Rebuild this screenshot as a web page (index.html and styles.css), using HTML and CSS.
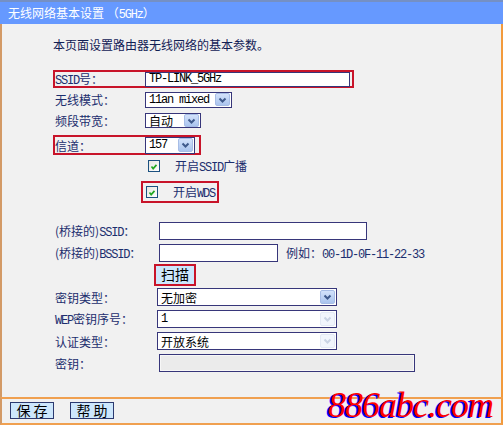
FILE: index.html
```html
<!DOCTYPE html>
<html lang="zh-CN">
<head>
  <meta charset="UTF-8">
  <title>无线网络基本设置</title>
  <link rel="stylesheet" href="styles.css">
</head>
<body>
  <div class="page">
    <div class="title">无线网络基本设置 （<span class="en">5GHz</span>）</div>

    <div class="main">
      <p class="intro">本页面设置路由器无线网络的基本参数。</p>

      <div class="form">
        <div class="row hl row-ssid">
          <span class="label"><span class="en">SSID</span>号：</span>
          <span class="input en ssid">TP-LINK_5GHz</span>
        </div>
        <div class="row">
          <span class="label">无线模式：</span>
          <span class="select mode">
            <span class="val en">11an mixed</span>
            <span class="arrow"><svg width="13" height="12" viewBox="0 0 13 12"><path d="M3.5 4.5 L6.5 7.5 L9.5 4.5" fill="none" stroke="#3f5a8c" stroke-width="2"/></svg></span>
          </span>
        </div>
        <div class="row">
          <span class="label">频段带宽：</span>
          <span class="select band">
            <span class="val">自动</span>
            <span class="arrow"><svg width="13" height="12" viewBox="0 0 13 12"><path d="M3.5 4.5 L6.5 7.5 L9.5 4.5" fill="none" stroke="#3f5a8c" stroke-width="2"/></svg></span>
          </span>
        </div>
        <div class="row hl row-channel">
          <span class="label">信道：</span>
          <span class="select channel">
            <span class="val en">157</span>
            <span class="arrow"><svg width="13" height="12" viewBox="0 0 13 12"><path d="M3.5 4.5 L6.5 7.5 L9.5 4.5" fill="none" stroke="#3f5a8c" stroke-width="2"/></svg></span>
          </span>
        </div>
        <div class="row row-check">
          <span class="check"><svg width="12" height="12" viewBox="0 0 12 12"><path d="M3 5.5 L5 8 L9 3.5" fill="none" stroke="#22a822" stroke-width="2"/></svg></span>
          <span>开启<span class="en">SSID</span>广播</span>
        </div>
        <div class="row hl row-wds">
          <span class="check"><svg width="12" height="12" viewBox="0 0 12 12"><path d="M3 5.5 L5 8 L9 3.5" fill="none" stroke="#22a822" stroke-width="2"/></svg></span>
          <span>开启<span class="en">WDS</span></span>
        </div>
      </div>

      <div class="form bridge">
        <div class="row">
          <span class="label">(桥接的)<span class="en">SSID</span>：</span>
          <span class="input bssid-wide"></span>
        </div>
        <div class="row">
          <span class="label">(桥接的)<span class="en">BSSID</span>：</span>
          <span class="input bssid"></span>
          <span class="hint">例如：<span class="en">00-1D-0F-11-22-33</span></span>
        </div>
        <div class="row hl row-scan">
          <span class="btn scan">扫描</span>
        </div>
        <div class="row">
          <span class="label">密钥类型：</span>
          <span class="select key">
            <span class="val">无加密</span>
            <span class="arrow"><svg width="13" height="12" viewBox="0 0 13 12"><path d="M3.5 4.5 L6.5 7.5 L9.5 4.5" fill="none" stroke="#3f5a8c" stroke-width="2"/></svg></span>
          </span>
        </div>
        <div class="row">
          <span class="label"><span class="en">WEP</span>密钥序号：</span>
          <span class="select key off">
            <span class="val en">1</span>
            <span class="arrow"><svg width="13" height="12" viewBox="0 0 13 12"><path d="M3.5 4.5 L6.5 7.5 L9.5 4.5" fill="none" stroke="#c9d3e4" stroke-width="2"/></svg></span>
          </span>
        </div>
        <div class="row">
          <span class="label">认证类型：</span>
          <span class="select key off">
            <span class="val">开放系统</span>
            <span class="arrow"><svg width="13" height="12" viewBox="0 0 13 12"><path d="M3.5 4.5 L6.5 7.5 L9.5 4.5" fill="none" stroke="#c9d3e4" stroke-width="2"/></svg></span>
          </span>
        </div>
        <div class="row">
          <span class="label">密钥：</span>
          <span class="input secret"></span>
        </div>
      </div>
    </div>

    <div class="footer">
      <span class="btn">保 存</span>
      <span class="btn">帮 助</span>
    </div>

    <div class="mark">886abc.com</div>
  </div>
</body>
</html>
```

FILE: styles.css
```css
* {
  margin: 0;
  padding: 0;
  box-sizing: border-box;
}

body {
  font-family: "Noto Sans CJK SC", "Liberation Sans", sans-serif;
  font-size: 12px;
  background: #f1f1f1;
  color: #1c2e6e;
}

.en {
  font-family: "Liberation Mono", "Noto Sans CJK SC", monospace;
  letter-spacing: -1.2px;
}

.page {
  position: relative;
  width: 503px;
  height: 425px;
  display: flex;
  flex-direction: column;
  overflow: hidden;
}

.title {
  height: 24px;
  line-height: 21px;
  padding-left: 8px;
  background: #6699ff;
  border-top: 2px solid #7590c4;
  color: #ffffff;
}

.main {
  flex: 1;
  border-left: 2px solid #d39a66;
  border-right: 2px solid #f29a3c;
}

.intro {
  margin: 14px 0 0 51px;
  line-height: 14px;
  color: #112055;
}

.form {
  margin-top: 18px;
  padding-left: 53px;
}

.row {
  display: flex;
  align-items: center;
  height: 21px;
  white-space: nowrap;
}

.hl {
  width: fit-content;
  margin-left: -2px;
  border: 2px solid #c8142a;
}

.row-ssid {
  height: 18px;
  margin-top: 2px;
  margin-bottom: 1px;
  padding-right: 2px;
}

.row-channel {
  height: 20px;
  margin-top: 4px;
  padding-right: 4px;
}

.row-check {
  padding-left: 93px;
}

.row-wds {
  height: 22px;
  margin-top: 5px;
  margin-left: 86px;
  padding-left: 3px;
  padding-right: 2px;
}

.label {
  width: 90px;
}

.input {
  display: inline-block;
  height: 18px;
  line-height: 16px;
  padding-left: 3px;
  background: #ffffff;
  border: 1px solid #37367a;
  color: #000000;
}

.ssid {
  width: 205px;
  height: 15px;
  line-height: 13px;
}

.select {
  display: inline-flex;
  align-items: center;
  justify-content: space-between;
  height: 18px;
  padding-left: 3px;
  padding-right: 1px;
  background: #ffffff;
  border: 1px solid #37367a;
  color: #000000;
}

.mode { width: 87px; height: 16px; }
.band { width: 56px; height: 15px; }
.channel { width: 50px; height: 17px; }

.arrow {
  display: flex;
  width: 15px;
  height: 14px;
  align-items: center;
  justify-content: center;
  background: linear-gradient(#d3e2fb, #aac4ee);
  border: 1px solid #a7bde6;
  border-radius: 2px;
}

.mode .arrow,
.band .arrow {
  height: 13px;
}

.off .arrow {
  background: #f1f5fc;
  border-color: #e3e9f4;
}

.check {
  display: flex;
  width: 12px;
  height: 12px;
  margin-right: 15px;
  background: linear-gradient(135deg, #e6e6e0, #ffffff);
  border: 1px solid #1c5180;
}

.bridge {
  margin-top: 17px;
}

.bridge .row {
  height: 22px;
}

.bridge .label {
  width: 104px;
}

.bssid-wide { width: 208px; }
.bssid { width: 119px; }

.hint {
  margin-left: 8px;
}

.row-scan {
  margin-left: 99px;
}

.btn {
  display: inline-block;
  height: 17px;
  line-height: 15px;
  text-align: center;
  background: #cde7fc;
  border: 1px solid #2c3a70;
  color: #000000;
  font-size: 14px;
}

.scan {
  width: 38px;
  height: 18px;
  line-height: 16px;
  border: none;
}

.bridge .select {
  margin-left: -2px;
}

.key {
  width: 180px;
}

.secret {
  width: 256px;
  background: #ebebeb;
  box-shadow: inset 0 0 0 1px #f7f7f7;
}

.footer {
  display: flex;
  gap: 16px;
  height: 28px;
  padding: 3px 0 0 8px;
  border: 2px solid #f0a050;
  border-left-color: #d39a66;
  border-right-color: #f29a3c;
}

.footer .btn {
  width: 44px;
}

.mark {
  position: absolute;
  right: 10px;
  bottom: -1px;
  font-family: "Liberation Serif", serif;
  font-style: italic;
  font-size: 36px;
  color: #ff0000;
  text-shadow: -2px 1px 0 #0000ff;
  letter-spacing: -1px;
}
```
